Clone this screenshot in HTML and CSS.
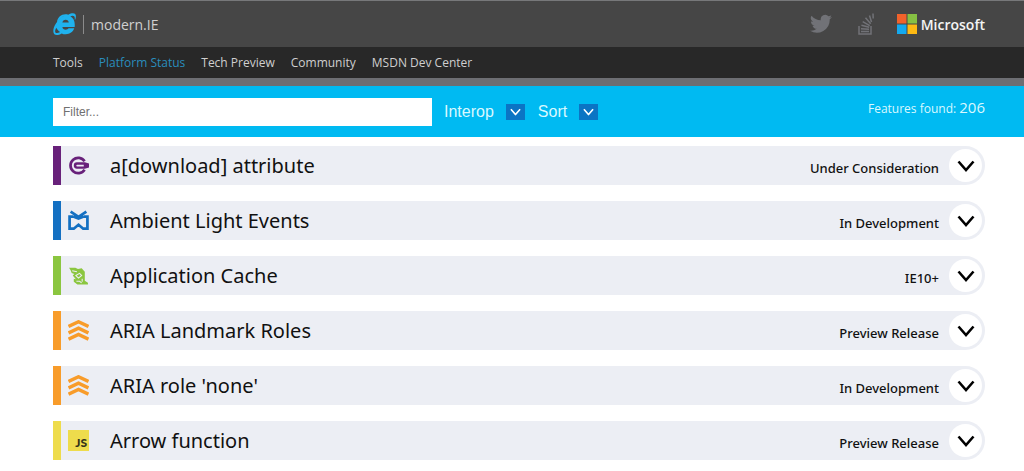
FILE: index.html
```html
<!DOCTYPE html>
<html lang="en">
<head>
<meta charset="utf-8">
<title>Platform Status - modern.IE</title>
<meta name="viewport" content="width=device-width, initial-scale=1">
<link rel="stylesheet" href="styles.css">
</head>
<body>
<svg class="defs" aria-hidden="true">
  <symbol id="chevron" viewBox="0 0 18 12"><path d="M1.500 1.500l7.500 8.500 7.500-8.500" fill="none" stroke="currentColor" stroke-width="2.600"/></symbol>
  <symbol id="layers" viewBox="0 0 20 20"><path d="M.5 6.200l9.500-4.500 9.500 4.500M.5 12.200l9.500-4.500 9.500 4.500M.5 18.200l9.500-4.500 9.500 4.500" fill="none" stroke="currentColor" stroke-width="3.300"/></symbol>
</svg>
<header class="masthead wrap">
  <a class="brand" href="#">
    <svg class="brand-logo" viewBox="0 0 24 24" aria-hidden="true">
      <path fill="#1fb2ee" fill-rule="evenodd" d="M22.600 15H9.800c.2 1.900 1.600 2.900 3.500 2.900 1.400 0 2.400-.5 3-1.400h5.900c-1.300 3.800-4.700 6.200-8.900 6.200-1.600 0-3-.3-4.200-.9-3 1.700-6.200 2.300-7.700.8C-.6 20.600.2 15.800 3.200 11.200 5.900 7 9.800 4.100 12.300 3.100 9 4.400 6.300 7 4.100 9.800 5 5 8.400 1.900 13 1.900c1 0 2 .1 2.900.4 3-1.600 5.900-2 7.200-.7 1.200 1.200 1.100 3.900-.3 6.600.0-1.900.1-3.500-.8-4.300-.8-.8-2.300-.7-3.900 0 3.500 2 5.100 5.500 4.500 11.100zM9.800 10.500h6.700c-.2-1.900-1.400-3-3.300-3-1.900 0-3.200 1.100-3.400 3zM3.500 15.900c-1.400 2.500-1.600 4.300-.8 5.100.8.800 2.600.5 4.800-.6-1.900-1.200-3.300-2.700-4-4.500z"/>
    </svg>
    <span class="brand-name">modern.IE</span>
  </a>
  <div class="social">
    <a href="#" aria-label="Twitter"><svg class="twitter" viewBox="0 0 24 20" aria-hidden="true"><path fill="#717277" d="M24 2.400a10 10 0 0 1-2.800.8A5 5 0 0 0 23.300.4a10 10 0 0 1-3.100 1.200A4.900 4.900 0 0 0 11.800 6 14 14 0 0 1 1.700.9a4.900 4.900 0 0 0 1.500 6.600A5 5 0 0 1 1 6.900a4.900 4.900 0 0 0 3.900 4.900 5 5 0 0 1-2.200.1 4.900 4.900 0 0 0 4.600 3.400A10 10 0 0 1 0 17.300 14 14 0 0 0 21.500 4.900 10 10 0 0 0 24 2.400z"/></svg></a>
    <a href="#" aria-label="Stack Overflow"><svg class="stack" viewBox="0 0 16 22" aria-hidden="true"><path fill="none" stroke="#717277" stroke-width="1.500" d="M1 13v8h12v-8M3 18.500h8M3 15.700l8 .5M3.400 12.300l7.800 2M4.700 8.600l7 4M7.500 4.800l5.200 6M11.500 2.500l2 6.500M15 .5l.2 5"/></svg></a>
    <a class="microsoft" href="#">
      <svg class="squares" viewBox="0 0 20 20" aria-hidden="true"><path fill="#f1622b" d="M0 0h9.500v9.500H0z"/><path fill="#86c043" d="M10.500 0H20v9.500h-9.500z"/><path fill="#14a9ee" d="M0 10.500h9.500V20H0z"/><path fill="#fdb913" d="M10.500 10.500H20V20h-9.500z"/></svg>
      <span>Microsoft</span>
    </a>
  </div>
</header>
<nav class="main-nav wrap">
  <a href="#">Tools</a>
  <a class="current" href="#">Platform Status</a>
  <a href="#">Tech Preview</a>
  <a href="#">Community</a>
  <a href="#">MSDN Dev Center</a>
</nav>
<form class="filters wrap">
  <input class="filter-box" type="text" placeholder="Filter..." aria-label="Filter">
  <button class="menu" type="button">Interop <span class="menu-arrow"><svg viewBox="0 0 18 12"><use href="#chevron"/></svg></span></button>
  <button class="menu" type="button">Sort <span class="menu-arrow"><svg viewBox="0 0 18 12"><use href="#chevron"/></svg></span></button>
  <p class="found">Features found: <span class="count">206</span></p>
</form>
<main class="features wrap">
  <article class="feature purple">
    <svg class="kind" viewBox="0 0 20 20" aria-hidden="true"><path d="M15.800 6A7.300 7.300 0 1 0 15.800 14" fill="none" stroke="currentColor" stroke-width="2.600"/><path d="M8.500 7h7.500l4 1v4l-4 1H8.500a3 3 0 0 1 0-6zm.2 2.300a.8.800 0 0 0 0 1.600H15V9.300z" fill="currentColor" fill-rule="evenodd"/></svg>
    <h2>a[download] attribute</h2><span class="status">Under Consideration</span>
    <button class="expand" type="button" aria-label="Expand"><svg viewBox="0 0 18 12"><use href="#chevron"/></svg></button>
  </article>
  <article class="feature blue">
    <svg class="kind" viewBox="0 0 20 20" aria-hidden="true"><path d="M2.500 1.500L10 6.500l7.500-5M5 6.200H1.500v11.600h4L10 14l4.500 3.800h4V6.200H15M5 6.200l5 2 5-2" fill="none" stroke="currentColor" stroke-width="2.600"/></svg>
    <h2>Ambient Light Events</h2><span class="status">In Development</span>
    <button class="expand" type="button" aria-label="Expand"><svg viewBox="0 0 18 12"><use href="#chevron"/></svg></button>
  </article>
  <article class="feature green">
    <svg class="kind" viewBox="0 0 20 20" aria-hidden="true"><path d="M1 2.500h6l2.500 1.200L13 3l3 3.500V15l3 2v1.500H9L5.500 16v-3l2 .5-3-3.500L6 8.500 3.500 7.500 2.500 5z" fill="currentColor"/><path d="M4 5.500l4.500 1M7.500 10l3.500-2 2 2-3 2.500zM8 15.500h3l2 1.500M13.500 13v3" fill="none" stroke="#eceef4" stroke-width="1"/></svg>
    <h2>Application Cache</h2><span class="status">IE10+</span>
    <button class="expand" type="button" aria-label="Expand"><svg viewBox="0 0 18 12"><use href="#chevron"/></svg></button>
  </article>
  <article class="feature orange">
    <svg class="kind" viewBox="0 0 20 20" aria-hidden="true"><use href="#layers"/></svg>
    <h2>ARIA Landmark Roles</h2><span class="status">Preview Release</span>
    <button class="expand" type="button" aria-label="Expand"><svg viewBox="0 0 18 12"><use href="#chevron"/></svg></button>
  </article>
  <article class="feature orange">
    <svg class="kind" viewBox="0 0 20 20" aria-hidden="true"><use href="#layers"/></svg>
    <h2>ARIA role 'none'</h2><span class="status">In Development</span>
    <button class="expand" type="button" aria-label="Expand"><svg viewBox="0 0 18 12"><use href="#chevron"/></svg></button>
  </article>
  <article class="feature yellow">
    <span class="kind js">JS</span>
    <h2>Arrow function</h2><span class="status">Preview Release</span>
    <button class="expand" type="button" aria-label="Expand"><svg viewBox="0 0 18 12"><use href="#chevron"/></svg></button>
  </article>
</main>
</body>
</html>
```
FILE: styles.css
```css
* { box-sizing: border-box; }
body {
  margin: 0;
  background: #fff;
  color: #111;
  font-family: "Noto Sans", "Open Sans", sans-serif;
}
a { color: inherit; text-decoration: none; }
svg { display: block; }
button { border: 0; padding: 0; background: none; color: inherit; cursor: pointer; }
.defs { position: absolute; width: 0; height: 0; }
.wrap { padding-left: 53px; padding-right: 39px; }

.masthead {
  display: flex;
  align-items: center;
  justify-content: space-between;
  height: 47px;
  border-top: 1px solid #77787a;
  background: #464646;
}
.brand { display: flex; align-items: center; gap: 7px; }
.brand-logo { width: 23px; height: 24px; }
.brand-name {
  padding-left: 7px;
  border-left: 1px solid #8b8b8b;
  color: #d0d0d0;
  font-family: "Open Sans", sans-serif;
  font-size: 14px;
  line-height: 19px;
}
.social { display: flex; align-items: center; }
.twitter { width: 22px; height: 20px; margin-right: 26px; }
.stack { width: 16px; height: 22px; margin-right: 23px; }
.microsoft {
  display: flex;
  align-items: center;
  gap: 4px;
  color: #f4f4f4;
  font-family: "Open Sans", sans-serif;
  font-size: 14px;
  font-weight: 600;
}
.squares { width: 20px; height: 20px; }

.main-nav {
  display: flex;
  align-items: center;
  gap: 16px;
  height: 39px;
  border-bottom: 8px solid #6d6e73;
  background: #282828;
  color: #cfcfcf;
  font-family: "Open Sans", sans-serif;
  font-size: 12px;
}
.current { color: #2a8dbd; }

.filters {
  display: flex;
  align-items: center;
  height: 51px;
  background: #00baf2;
  color: #d9f8ff;
}
.filter-box {
  flex: 0 1 379px;
  min-width: 0;
  height: 28px;
  margin-right: 12px;
  padding: 0 10px;
  border: 0;
  border-radius: 0;
  background: #fff;
  font: 12px "Liberation Sans", Arial, sans-serif;
}
.filter-box::placeholder { color: #707070; }
.menu {
  display: flex;
  align-items: center;
  gap: 12px;
  margin-right: 13px;
  font: 16px "Liberation Sans", Arial, sans-serif;
}
.menu-arrow {
  display: grid;
  place-items: center;
  width: 19px;
  height: 16px;
  background: #0b74c4;
  color: #fff;
}
.menu-arrow svg { width: 11px; height: 8px; }
.found {
  margin: 0 0 10px auto;
  font-family: "Open Sans", sans-serif;
  font-size: 12px;
}
.count { font-size: 15px; }

.features { display: grid; gap: 16px; padding-top: 9px; }
.feature {
  display: flex;
  align-items: center;
  height: 39px;
  padding: 0 3px 0 7px;
  border-left: 8px solid;
  border-radius: 0 20px 20px 0;
  background: #eceef4;
}
.purple { color: #68217a; }
.blue { color: #1470c2; }
.green { color: #8bc640; }
.orange { color: #f89c2a; }
.yellow { color: #eedc4c; }
.kind { flex: none; width: 21px; height: 21px; margin-right: 21px; }
.js {
  padding: 5px 2px 0 0;
  background: #eedc4c;
  color: #33331a;
  font-family: Lato, sans-serif;
  font-size: 12px;
  font-weight: 900;
  line-height: 16px;
  text-align: right;
}
.feature h2 {
  margin: 0;
  color: #111;
  font-size: 20px;
  font-weight: 400;
  line-height: 28px;
}
.status {
  margin: 4px 10px 0 auto;
  color: #111;
  font-size: 13px;
  font-weight: 500;
  line-height: 18px;
}
.expand {
  display: grid;
  place-items: center;
  width: 33px;
  height: 33px;
  border-radius: 50%;
  background: #fff;
  color: #000;
}
.expand svg { width: 18px; height: 12px; }
```
